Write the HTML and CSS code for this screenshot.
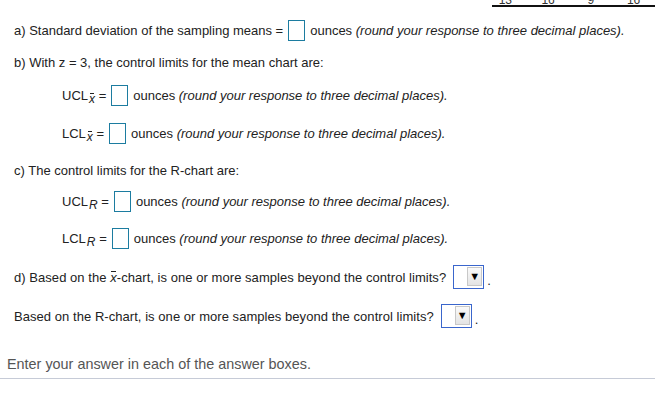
FILE: index.html
```html
<!DOCTYPE html>
<html>
<head>
<meta charset="utf-8">
<link rel="stylesheet" href="styles.css">
</head>
<body>
<div class="strip">
  <div class="tbl">
    <span class="num">13</span><span class="num">16</span><span class="num">9</span><span class="num">16</span>
  </div>
</div>
<div class="content">
  <div class="row r-a">a) Standard deviation of the sampling means =<span class="box"></span><span class="unit">ounces <i>(round your response to three decimal places).</i></span></div>
  <div class="row r-b">b) With z = 3, the control limits for the mean chart are:</div>
  <div class="row ind r-ucl">UCL<sub class="sub"><span class="xbar">x</span></sub>&nbsp;=<span class="box"></span><span class="unit">ounces <i>(round your response to three decimal places).</i></span></div>
  <div class="row ind r-lcl">LCL<sub class="sub"><span class="xbar">x</span></sub>&nbsp;=<span class="box"></span><span class="unit">ounces <i>(round your response to three decimal places).</i></span></div>
  <div class="row r-c">c) The control limits for the R-chart are:</div>
  <div class="row ind r-uclr">UCL<sub class="sub"><i>R</i></sub>&nbsp;=<span class="box"></span><span class="unit">ounces <i>(round your response to three decimal places).</i></span></div>
  <div class="row ind r-lclr">LCL<sub class="sub"><i>R</i></sub>&nbsp;=<span class="box"></span><span class="unit">ounces <i>(round your response to three decimal places).</i></span></div>
  <div class="row r-d">d) Based on the&nbsp;<span class="xbar">x</span>-chart, is one or more samples beyond the control limits?<span class="dd"><span class="btn">&#9660;</span></span><span class="dot">.</span></div>
  <div class="row r-r">Based on the R-chart, is one or more samples beyond the control limits?<span class="dd"><span class="btn">&#9660;</span></span><span class="dot">.</span></div>
</div>
<div class="footer">Enter your answer in each of the answer boxes.</div>
</body>
</html>
```

FILE: styles.css
```css
html, body {
  margin: 0;
  padding: 0;
  background: #fff;
}
body {
  font-family: "Liberation Sans", Arial, sans-serif;
  font-size: 13px;
  color: #222;
}
.strip {
  height: 7px;
  overflow: hidden;
}
.tbl {
  margin-left: 484px;
  height: 7px;
  background: linear-gradient(#111, #111) no-repeat 8px 100% / 100% 2px;
  display: flex;
  align-items: flex-end;
}
.num {
  font-size: 12px;
  line-height: 12px;
  margin-bottom: 1px;
  color: #333;
  width: 43px;
  text-align: center;
}
.content {
  padding-left: 14px;
}
.row {
  display: flex;
  align-items: center;
  height: 21px;
  white-space: nowrap;
}
.ind { padding-left: 48px; }
.r-a { margin-top: 13px; }
.r-b { margin-top: 11px; }
.r-ucl { margin-top: 12px; }
.r-lcl { margin-top: 17px; }
.r-c { margin-top: 16px; }
.r-uclr { margin-top: 10px; }
.r-lclr { margin-top: 16px; }
.r-d { margin-top: 16px; height: 24px; letter-spacing: 0.05px; }
.r-r { margin-top: 15px; height: 24px; letter-spacing: 0.05px; }
.box {
  display: inline-block;
  width: 17px;
  height: 21px;
  box-sizing: border-box;
  border: 1.5px solid #1c7ca0;
  margin-left: 5px;
  margin-right: 5px;
  background: #fff;
}
.unit i { font-style: italic; }
.sub {
  font-size: 12px;
  position: relative;
  top: 3px;
  vertical-align: baseline;
  margin-left: 1px;
}
.sub i { font-style: italic; }
.xbar {
  font-style: italic;
  display: inline-block;
  position: relative;
}
.xbar::before {
  content: "";
  position: absolute;
  left: 1px;
  right: 1px;
  top: 1px;
  border-top: 1px solid #222;
}
.dd {
  display: inline-block;
  width: 31px;
  height: 24px;
  box-sizing: border-box;
  border: 1.5px solid #3a66cc;
  margin-left: 7px;
  background: #fff;
  position: relative;
}
.btn {
  position: absolute;
  right: 1px;
  top: 1px;
  width: 15px;
  height: 19px;
  box-sizing: border-box;
  border: 1px solid #c8c8c8;
  background: linear-gradient(#fafafa, #e4e4e4);
  font-size: 11px;
  line-height: 17px;
  text-align: center;
  color: #000;
}
.dot { margin-left: 3px; margin-top: 6px; }
.footer {
  margin-top: 27px;
  padding-left: 7px;
  height: 18px;
  line-height: 18px;
  font-size: 14.4px;
  color: #555;
  border-bottom: 1px solid #c6cbd7;
  padding-bottom: 5px;
}
```
